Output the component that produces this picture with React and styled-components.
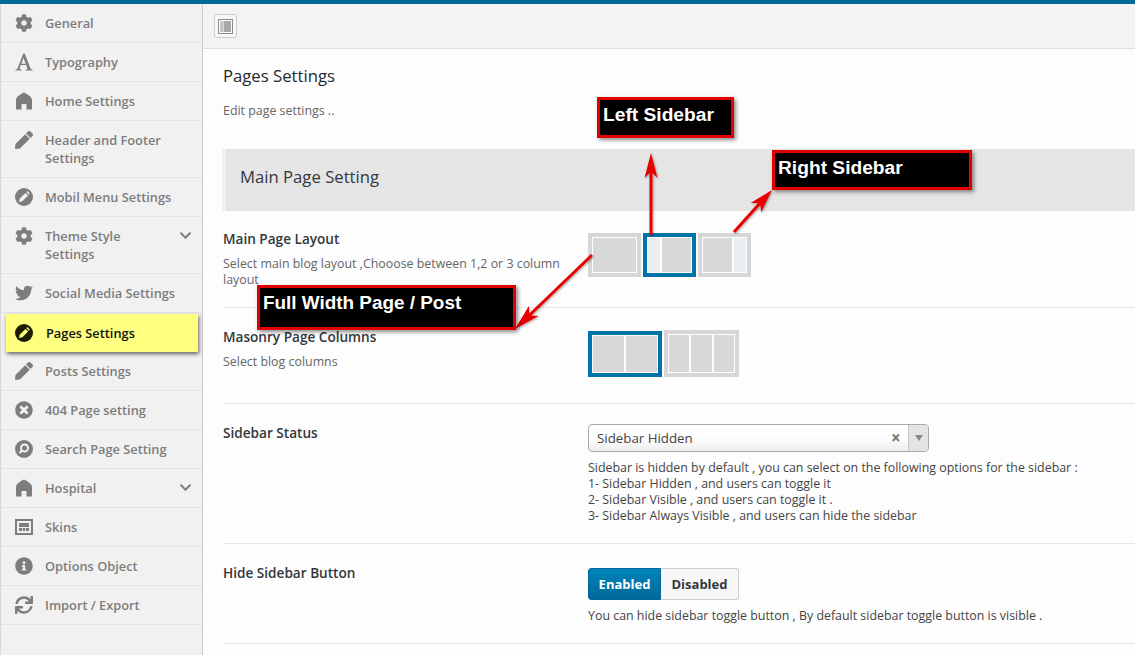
import React from 'react';
import styled, { createGlobalStyle } from 'styled-components';
import { FaCog, FaPen, FaTwitter, FaTimesCircle, FaInfoCircle, FaSync, FaChevronDown } from 'react-icons/fa';

const GlobalStyle = createGlobalStyle`
    html, body {
        margin: 0;
        padding: 0;
        height: 655px;
        overflow: hidden;
        background: #fdfdfd;
        font-family: "Open Sans", "Liberation Sans", sans-serif;
    }
    * { box-sizing: border-box; }
`;

const HomeIcon = () => (
    <svg viewBox="0 0 18 18" width="18" height="18" fill="currentColor">
        <path d="M1 17.500V8C1 5 5 2.500 9 .500c4 2 8 4.500 8 7.500v9.500h-5.500V12h-5v5.500z" />
    </svg>
);

const FontIcon = () => (
    <svg viewBox="0 0 18 18" width="18" height="18" fill="currentColor">
        <path d="M.500 17.500v-1c1.200 0 1.700-.4 2.200-1.500L8.300.500h1.400l5.700 14.500c.4 1.100 1 1.500 2.100 1.500v1h-6.800v-1c1.500 0 1.900-.4 1.500-1.500l-1.100-3H5.800l-1 2.800c-.4 1.200 0 1.700 1.700 1.700v1zM6.400 10.700h4.300L8.500 5z" />
    </svg>
);

const PencilCircle = () => (
    <svg viewBox="0 0 18 18" width="18" height="18">
        <circle cx="9" cy="9" r="9" fill="currentColor" />
        <path d="M4 14l.8-3.400 5.700-5.700 2.600 2.600-5.700 5.700zM11.300 4.100l1-1 2.600 2.600-1 1z" fill="#f1f1f1" />
    </svg>
);

const SearchCircle = () => (
    <svg viewBox="0 0 18 18" width="18" height="18">
        <circle cx="9" cy="9" r="9" fill="currentColor" />
        <circle cx="9.500" cy="8" r="3.500" fill="none" stroke="#f1f1f1" strokeWidth="2" />
        <path d="M7 10.500l-2.500 2.500" stroke="#f1f1f1" strokeWidth="2.200" />
    </svg>
);

const SkinIcon = () => (
    <svg viewBox="0 0 18 18" width="18" height="18" fill="currentColor">
        <path fillRule="evenodd" d="M0 1h18v16H0zM2 3v12h14V3z" />
        <path d="M4 5h10v4H4zM4 10h3v3H4zM7.800 10h2.400v3H7.800zM11 10h3v3h-3z" />
    </svg>
);

const menu = [
    { label: 'General', icon: <FaCog /> },
    { label: 'Typography', icon: <FontIcon /> },
    { label: 'Home Settings', icon: <HomeIcon /> },
    { label: 'Header and Footer Settings', icon: <FaPen /> },
    { label: 'Mobil Menu Settings', icon: <PencilCircle /> },
    { label: 'Theme Style Settings', icon: <FaCog />, arrow: true },
    { label: 'Social Media Settings', icon: <FaTwitter /> },
    { label: 'Pages Settings', icon: <PencilCircle />, active: true },
    { label: 'Posts Settings', icon: <FaPen /> },
    { label: '404 Page setting', icon: <FaTimesCircle /> },
    { label: 'Search Page Setting', icon: <SearchCircle /> },
    { label: 'Hospital', icon: <HomeIcon />, arrow: true },
    { label: 'Skins', icon: <SkinIcon /> },
    { label: 'Options Object', icon: <FaInfoCircle /> },
    { label: 'Import / Export', icon: <FaSync /> },
];

// arrow polygon from tail to tip, with a barbed head
const arrowPath = (x1, y1, x2, y2, w = 3, len = 25, head = 13) => {
    const d = Math.hypot(x2 - x1, y2 - y1);
    const ux = (x2 - x1) / d;
    const uy = (y2 - y1) / d;
    const at = (along, side) => `${(x1 + ux * along - uy * side).toFixed(1)} ${(y1 + uy * along + ux * side).toFixed(1)}`;
    const neck = d - len + 5;
    return `M${at(0, -w / 2)}L${at(neck, -w / 2)}L${at(d - len, -head / 2)}L${at(d, 0)}L${at(d - len, head / 2)}L${at(neck, w / 2)}L${at(0, w / 2)}Z`;
};

const Tile = ({ cols, selected, wide, tall }) => (
    <TileBox $selected={selected} $wide={wide} $tall={tall}>
        <TileInner>
            {cols.map((c, i) => <TileCol key={i} $flex={c.flex} $light={c.light} />)}
        </TileInner>
    </TileBox>
);

const App = () => {
    return (
        <Page>
            <GlobalStyle />
            <TopBar />
            <Body>
                <Sidebar>
                    {menu.map(item => (
                        <MenuItem key={item.label} $active={item.active}>
                            <MenuIcon $active={item.active}>{item.icon}</MenuIcon>
                            <MenuLabel $active={item.active} $arrow={item.arrow}>{item.label}</MenuLabel>
                            {item.arrow && <MenuArrow><FaChevronDown /></MenuArrow>}
                        </MenuItem>
                    ))}
                </Sidebar>
                <Main>
                    <Toolbar>
                        <ToolButton>
                            <svg viewBox="0 0 15 15" width="15" height="15">
                                <rect x="0.500" y="0.500" width="14" height="14" fill="#fff" stroke="#8a8a8a" />
                                <rect x="2" y="2" width="3" height="11" fill="#c4c4c4" />
                                <rect x="5.500" y="2" width="7.500" height="11" fill="#a8a8a8" />
                            </svg>
                        </ToolButton>
                    </Toolbar>
                    <Content>
                        <PageTitle>Pages Settings</PageTitle>
                        <PageSub>Edit page settings ..</PageSub>
                        <SectionHead>Main Page Setting</SectionHead>

                        <Row $bottom={19}>
                            <RowInfo>
                                <RowLabel>Main Page Layout</RowLabel>
                                <RowDesc>Select main blog layout ,Chooose between 1,2 or 3 column layout</RowDesc>
                            </RowInfo>
                            <RowControl $top={3}>
                                <Tiles>
                                    <Tile cols={[{ flex: 1 }]} />
                                    <Tile selected cols={[{ flex: 2, light: true }, { flex: 5 }]} />
                                    <Tile cols={[{ flex: 5 }, { flex: 2, light: true }]} />
                                </Tiles>
                            </RowControl>
                        </Row>

                        <Row $bottom={26}>
                            <RowInfo>
                                <RowLabel>Masonry Page Columns</RowLabel>
                                <RowDesc>Select blog columns</RowDesc>
                            </RowInfo>
                            <RowControl $top={2}>
                                <Tiles $center>
                                    <Tile wide selected cols={[{ flex: 1 }, { flex: 1 }]} />
                                    <Tile wide tall cols={[{ flex: 1 }, { flex: 1 }, { flex: 1 }]} />
                                </Tiles>
                            </RowControl>
                        </Row>

                        <Row $bottom={19}>
                            <RowInfo>
                                <RowLabel>Sidebar Status</RowLabel>
                            </RowInfo>
                            <RowControl>
                                <SelectBox>
                                    <SelectValue>Sidebar Hidden</SelectValue>
                                    <SelectClear>×</SelectClear>
                                    <SelectArrow><SelectCaret /></SelectArrow>
                                </SelectBox>
                                <ControlNote>
                                    Sidebar is hidden by default , you can select on the following options for the sidebar :<br />
                                    1- Sidebar Hidden , and users can toggle it<br />
                                    2- Sidebar Visible , and users can toggle it .<br />
                                    3- Sidebar Always Visible , and users can hide the sidebar
                                </ControlNote>
                            </RowControl>
                        </Row>

                        <Row $bottom={19}>
                            <RowInfo>
                                <RowLabel>Hide Sidebar Button</RowLabel>
                            </RowInfo>
                            <RowControl $top={4}>
                                <Toggle>
                                    <ToggleOn>Enabled</ToggleOn>
                                    <ToggleOff>Disabled</ToggleOff>
                                </Toggle>
                                <ControlNote>You can hide sidebar toggle button , By default sidebar toggle button is visible .</ControlNote>
                            </RowControl>
                        </Row>
                    </Content>
                </Main>
            </Body>

            <Arrows viewBox="0 0 1135 655" width="1135" height="655">
                <defs>
                    <filter id="arrowShadow" x="-20%" y="-20%" width="140%" height="140%">
                        <feDropShadow dx="1" dy="1" stdDeviation="1" floodColor="#000" floodOpacity="0.35" />
                    </filter>
                </defs>
                <g fill="#e60000" filter="url(#arrowShadow)">
                    <path d={arrowPath(651, 235, 651, 153)} />
                    <path d={arrowPath(734, 232, 772, 190, 3, 24, 14)} />
                    <path d={arrowPath(592, 255, 515, 329, 3, 26, 14)} />
                </g>
            </Arrows>

            <Callout $x={597} $y={97} $w={137} $h={41} $lift={5}>Left Sidebar</Callout>
            <Callout $x={772} $y={150} $w={200} $h={40} $lift={5}>Right Sidebar</Callout>
            <Callout $x={257} $y={285} $w={259} $h={45} $lift={9} $size={18.9}>Full Width Page / Post</Callout>
        </Page>
    );
};

export default App;


const Page = styled.div`
    position: relative;
    width: 1135px;
    height: 655px;
    overflow: hidden;
`

const TopBar = styled.div`
    height: 4px;
    background: #006799;
`

const Body = styled.div`
    display: flex;
    height: 651px;
`

const Sidebar = styled.nav`
    width: 203px;
    flex-shrink: 0;
    background: #f1f1f1;
    border-left: 1px solid #d8d8d8;
    border-right: 1px solid #ccc;
`

const MenuItem = styled.div`
    position: relative;
    display: flex;
    align-items: flex-start;
    padding: 10px 10px 10px ${props => props.$active ? '9px' : '14px'};
    border-bottom: 1px solid #e4e4e4;
    min-height: 39px;
    ${props => props.$active && `
        margin: 1px 4px 0 5px;
        min-height: 38px;
        background: #ffff80;
        border-bottom: 0;
        box-shadow: 1px 2px 4px rgba(0, 0, 0, 0.6);
        z-index: 1;
    `}
`

const MenuIcon = styled.span`
    display: flex;
    align-items: center;
    justify-content: center;
    width: 18px;
    height: 18px;
    margin-right: 12px;
    flex-shrink: 0;
    font-size: 18px;
    color: ${props => props.$active ? '#1c1c00' : '#7d7d7d'};
    svg circle + path { fill: ${props => props.$active ? '#ffff80' : '#f1f1f1'}; }
`

const MenuLabel = styled.span`
    flex: 1;
    font-size: 12.8px;
    line-height: 18px;
    font-weight: 600;
    color: ${props => props.$active ? '#111' : '#7d7d7d'};
    padding-right: ${props => props.$arrow ? '40px' : '0'};
    ${props => props.$active && 'margin-left: 1px;'}
`

const MenuArrow = styled.span`
    position: absolute;
    top: 12px;
    right: 10px;
    font-size: 13px;
    line-height: 13px;
    color: #7d7d7d;
`

const Main = styled.main`
    flex: 1;
    min-width: 0;
    background: #fdfdfd;
`

const Toolbar = styled.div`
    display: flex;
    align-items: center;
    height: 45px;
    padding: 0 0 0 11px;
    background: #f3f3f3;
    border-bottom: 1px solid #dedede;
`

const ToolButton = styled.button`
    display: flex;
    align-items: center;
    justify-content: center;
    width: 23px;
    height: 24px;
    padding: 0;
    background: #f7f7f7;
    border: 1px solid #ccc;
    border-radius: 3px;
`

const Content = styled.div`
    padding: 0 0 0 20px;
`

const PageTitle = styled.h2`
    margin: 0;
    padding-top: 15px;
    font-size: 16.7px;
    line-height: 24px;
    font-weight: 400;
    color: #23282d;
`

const PageSub = styled.p`
    margin: 14px 0 0;
    font-size: 12.4px;
    line-height: 18px;
    color: #666;
`

const SectionHead = styled.h3`
    margin: 29px 0 0 -1px;
    height: 62px;
    padding-left: 14px;
    font-size: 16.7px;
    line-height: 56px;
    font-weight: 400;
    color: #32373c;
    background: #e5e5e5;
    border-left: 4px solid #f1f1f1;
`

const Row = styled.section`
    display: flex;
    padding: 20px 0 ${props => props.$bottom}px;
    border-bottom: 1px solid #e6e6e6;
    &:first-of-type { padding-top: 19px; }
`

const RowInfo = styled.div`
    width: 345px;
    flex-shrink: 0;
    margin-right: 20px;
`

const RowLabel = styled.div`
    font-size: 13.6px;
    line-height: 18px;
    font-weight: 600;
    color: #32373c;
`

const RowDesc = styled.div`
    margin-top: 8px;
    font-size: 12.4px;
    line-height: 16px;
    color: #666;
`

const RowControl = styled.div`
    padding-top: ${props => props.$top || 0}px;
`

const Tiles = styled.div`
    display: flex;
    gap: 2px;
    align-items: ${props => props.$center ? 'flex-end' : 'flex-start'};
`

const TileBox = styled.div`
    width: ${props => props.$tall ? '75px' : props.$wide ? '74px' : '53px'};
    height: ${props => props.$tall ? '47px' : props.$wide ? '46px' : '44px'};
    border: 4px solid ${props => props.$selected ? '#0073aa' : '#d6d6d6'};
    background: #fff;
    padding: 1px;
`

const TileInner = styled.div`
    display: flex;
    gap: 2px;
    height: 100%;
`

const TileCol = styled.div`
    flex: ${props => props.$flex};
    background: ${props => props.$light ? '#e8eef1' : '#d8d8d8'};
`

const SelectBox = styled.div`
    display: flex;
    align-items: center;
    width: 341px;
    height: 28px;
    padding-left: 8px;
    background: linear-gradient(#fff 45%, #eee);
    border: 1px solid #aaa;
    border-radius: 4px;
`

const SelectValue = styled.span`
    flex: 1;
    font-size: 13.3px;
    color: #444;
`

const SelectClear = styled.span`
    width: 17px;
    font-size: 17px;
    line-height: 26px;
    font-weight: 700;
    color: #777;
`

const SelectArrow = styled.span`
    display: flex;
    align-items: center;
    justify-content: center;
    width: 20px;
    height: 100%;
    background: #e4e4e4;
    border-left: 1px solid #c4c4c4;
    border-radius: 0 3px 3px 0;
`

const SelectCaret = styled.i`
    border-style: solid;
    border-width: 6px 4px 0;
    border-color: #888 transparent transparent;
`

const ControlNote = styled.p`
    margin: 8px 0 0;
    font-size: 12.4px;
    line-height: 16px;
    color: #444;
`

const Toggle = styled.div`
    display: flex;
    width: 151px;
    height: 32px;
    font-size: 13px;
    line-height: 30px;
    font-weight: 700;
    text-align: center;
`

const ToggleOn = styled.div`
    width: 73px;
    color: #fff;
    background: linear-gradient(#0085ba, #006799);
    border: 1px solid #006799;
    border-radius: 3px 0 0 3px;
`

const ToggleOff = styled.div`
    width: 78px;
    color: #32373c;
    background: #f7f7f7;
    border: 1px solid #ccc;
    border-left: 0;
    border-radius: 0 3px 3px 0;
`

const Arrows = styled.svg`
    position: absolute;
    top: 0;
    left: 0;
    pointer-events: none;
`

const Callout = styled.div`
    position: absolute;
    left: ${props => props.$x}px;
    top: ${props => props.$y}px;
    width: ${props => props.$w}px;
    height: ${props => props.$h}px;
    padding: 0 0 ${props => props.$lift}px 3px;
    display: flex;
    align-items: center;
    font-family: "Liberation Sans", Arial, sans-serif;
    font-size: ${props => props.$size || 19.2}px;
    font-weight: 700;
    color: #fff;
    background: #000;
    border: 3px solid #e30000;
    box-shadow: 2px 2px 4px rgba(0, 0, 0, 0.45);
`
